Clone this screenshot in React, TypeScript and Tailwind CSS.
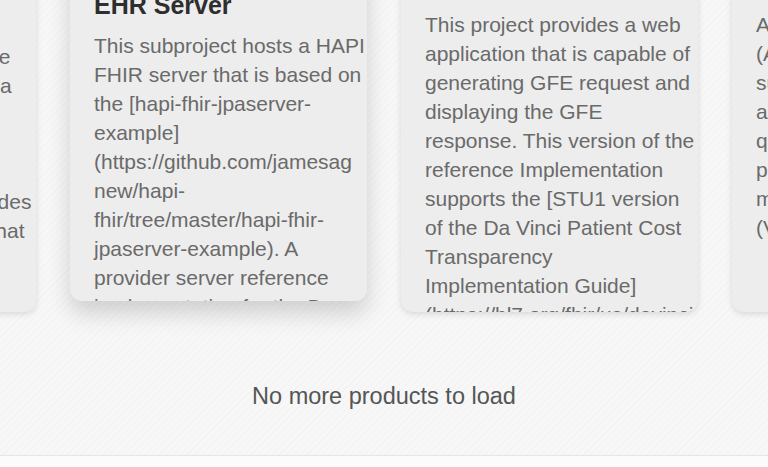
import React from 'react';

interface Product {
  title: string[];
  lines: string[];
  lifted?: boolean;
}

const products: Product[] = [
  {
    title: ['Da Vinci PCT', 'Reference Payer', 'Server'],
    lines: [
      'This subproject is a simple',
      'Payer server that returns a',
      'Good Faith Estimate for',
      'a given claim. It also',
      'supports payer inquiries.',
      'This RI service also provides',
      'a GFE submit endpoint, that',
    ],
  },
  {
    title: ['Da Vinci PCT', 'Reference', 'EHR Server'],
    lines: [
      'This subproject hosts a HAPI',
      'FHIR server that is based on',
      'the [hapi-fhir-jpaserver-',
      'example]',
      '(https://github.com/jamesag',
      'new/hapi-',
      'fhir/tree/master/hapi-fhir-',
      'jpaserver-example). A',
      'provider server reference',
      'implementation for the Da',
      'Vinci PCT project.',
    ],
    lifted: true,
  },
  {
    title: ['Da Vinci PCT GFE', 'Requestor'],
    lines: [
      'This project provides a web',
      'application that is capable of',
      'generating GFE request and',
      'displaying the GFE',
      'response. This version of the',
      'reference Implementation',
      'supports the [STU1 version',
      'of the Da Vinci Patient Cost',
      'Transparency',
      'Implementation Guide]',
      '(https://hl7.org/fhir/us/davinci-',
      'pct/).',
    ],
  },
  {
    title: ['Da Vinci PCT', 'Payer Server'],
    lines: [
      'A reference implementation',
      '(API) that simulates the',
      'submission of GFE',
      'and the associated',
      'query operations for the',
      'payer and provider',
      'mock servers',
      '(Version 1.0.0).',
    ],
  },
];

function ProductCard({ product }: { product: Product }) {
  return (
    <div
      className={`w-[297px] h-[400px] shrink-0 overflow-hidden rounded-xl bg-[#ededed] pt-6 pl-6 pr-1 ${
        product.lifted
          ? '-translate-y-[11px] shadow-[0_12px_22px_rgba(0,0,0,0.16)]'
          : 'shadow-[0_2px_6px_rgba(0,0,0,0.13)]'
      }`}
    >
      <h3 className="text-[25px] leading-[32px] font-bold text-[#2e2e2e] whitespace-nowrap">
        {product.title.map((t) => (
          <span key={t} className="block">
            {t}
          </span>
        ))}
      </h3>
      <p className="mt-[10px] text-[21px] leading-[29px] text-[#6a6a6a] whitespace-nowrap">
        {product.lines.map((l, i) => (
          <span key={i} className="block">
            {l}
          </span>
        ))}
      </p>
    </div>
  );
}

export default function App() {
  return (
    <div
      className="h-[467px] w-[768px] overflow-hidden flex flex-col bg-[#f6f6f6] bg-[repeating-linear-gradient(135deg,#f7f7f7_0px,#f7f7f7_3px,#f2f2f2_4px,#f7f7f7_5px)]"
      style={{ fontFamily: '"Liberation Sans", Arial, Helvetica, sans-serif' }}
    >
      <div className="-mt-[88px] -ml-[261px] flex items-start gap-[34px]">
        {products.map((p, i) => (
          <ProductCard key={i} product={p} />
        ))}
      </div>

      <div className="mt-[68px] text-center text-[23.5px] leading-[32px] text-[#555555]">
        No more products to load
      </div>

      <div className="mt-auto h-[12px] border-t border-[#e6e6e6] bg-[#fbfbfb]" />
    </div>
  );
}
